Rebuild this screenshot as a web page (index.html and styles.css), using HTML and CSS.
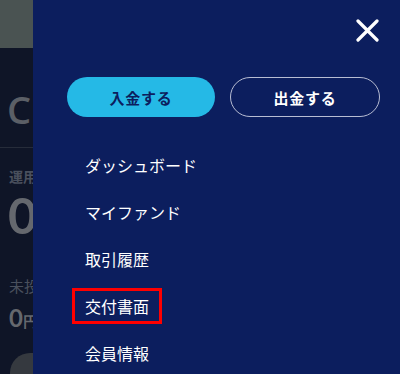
FILE: index.html
```html
<!DOCTYPE html>
<html lang="ja">
<head>
<meta charset="utf-8">
<link rel="stylesheet" href="styles.css">
</head>
<body>
<div class="screen">
  <div class="backdrop">
    <div class="bd-inner">
      <div class="bd-top"></div>
      <div class="bd-title">C</div>
      <div class="bd-rule"></div>
      <div class="bd-label">運用</div>
      <div class="bd-big">0</div>
      <div class="bd-sub">未投</div>
      <div class="bd-amount">0<span class="yen">円</span></div>
      <div class="bd-pill"></div>
    </div>
  </div>
  <nav class="panel">
    <div class="close-row">
      <button class="close" aria-label="閉じる">
        <svg width="23" height="23" viewBox="0 0 23 23"><path d="M2 2 L21 21 M21 2 L2 21" stroke="#fff" stroke-width="3.2" stroke-linecap="round"/></svg>
      </button>
    </div>
    <div class="actions">
      <a class="btn btn-primary">入金する</a>
      <a class="btn btn-outline">出金する</a>
    </div>
    <ul class="menu">
      <li><a class="menu-link">ダッシュボード</a></li>
      <li><a class="menu-link">マイファンド</a></li>
      <li><a class="menu-link">取引履歴</a></li>
      <li><a class="menu-link is-marked">交付書面</a></li>
      <li><a class="menu-link">会員情報</a></li>
    </ul>
  </nav>
</div>
</body>
</html>
```
FILE: styles.css
```css
* { box-sizing: border-box; }
html, body { margin: 0; padding: 0; }
body {
  width: 400px;
  height: 374px;
  overflow: hidden;
  font-family: "Noto Sans CJK JP", "Noto Sans", sans-serif;
  background: #0f1527;
}
.screen {
  display: flex;
  width: 400px;
  height: 374px;
}
.backdrop {
  width: 33px;
  flex: none;
  overflow: hidden;
  background: #0f1527;
}
.bd-inner {
  width: 200px;
}
.bd-top {
  height: 48px;
  background: #4a5352;
}
.bd-title {
  font-family: "Open Sans", "Noto Sans", sans-serif;
  font-size: 38px;
  font-weight: 600;
  line-height: 38px;
  color: #5b5f66;
  padding: 42px 0 0 7px;
  height: 99px;
}
.bd-rule {
  height: 1px;
  background: #262c3a;
}
.bd-label {
  font-size: 14px;
  font-weight: 700;
  color: #4a505d;
  line-height: 18px;
  padding: 19px 0 0 9px;
}
.bd-big {
  font-family: Lato, "Noto Sans", sans-serif;
  font-size: 50px;
  font-weight: 700;
  line-height: 40px;
  color: #65686e;
  padding: 0 0 0 8px;
  margin-top: 10px;
}
.bd-sub {
  font-size: 15px;
  color: #4a505d;
  line-height: 20px;
  padding: 0 0 0 9px;
  margin-top: 41px;
}
.bd-amount {
  font-family: Lato, "Noto Sans", sans-serif;
  font-size: 24px;
  font-weight: 700;
  line-height: 28px;
  color: #65686e;
  padding: 0 0 0 9px;
  margin-top: 8px;
}
.bd-amount .yen { font-size: 15px; }
.bd-pill {
  margin: 18px 0 0 10px;
  width: 120px;
  height: 40px;
  border-radius: 20px;
  background: #35393f;
}
.panel {
  flex: 1;
  background: #0c1e5e;
  padding: 19px 20px 0 34px;
}
.close-row {
  display: flex;
  justify-content: flex-end;
  height: 23px;
  padding-right: 1px;
}
.close {
  width: 23px;
  height: 23px;
  padding: 0;
  border: 0;
  background: none;
  display: block;
}
.close svg { display: block; }
.actions {
  display: flex;
  gap: 15px;
  margin-top: 35px;
}
.btn {
  flex: 1;
  height: 40px;
  border-radius: 20px;
  display: flex;
  align-items: center;
  justify-content: center;
  font-size: 15px;
  font-weight: 700;
  letter-spacing: 0.8px;
}
.btn-primary {
  background: #25b9e6;
  color: #0c1e5e;
}
.btn-outline {
  border: 1px solid #b8bdd3;
  color: #ffffff;
}
.menu {
  list-style: none;
  margin: 30px 0 0 5px;
  padding: 0;
  display: flex;
  flex-direction: column;
  gap: 11px;
  align-items: flex-start;
}
.menu-link {
  display: block;
  color: #ffffff;
  font-size: 16px;
  line-height: 24px;
  padding: 3px 10px;
  border: 3px solid transparent;
}
.menu-link.is-marked {
  border-color: #ff0000;
}
```
